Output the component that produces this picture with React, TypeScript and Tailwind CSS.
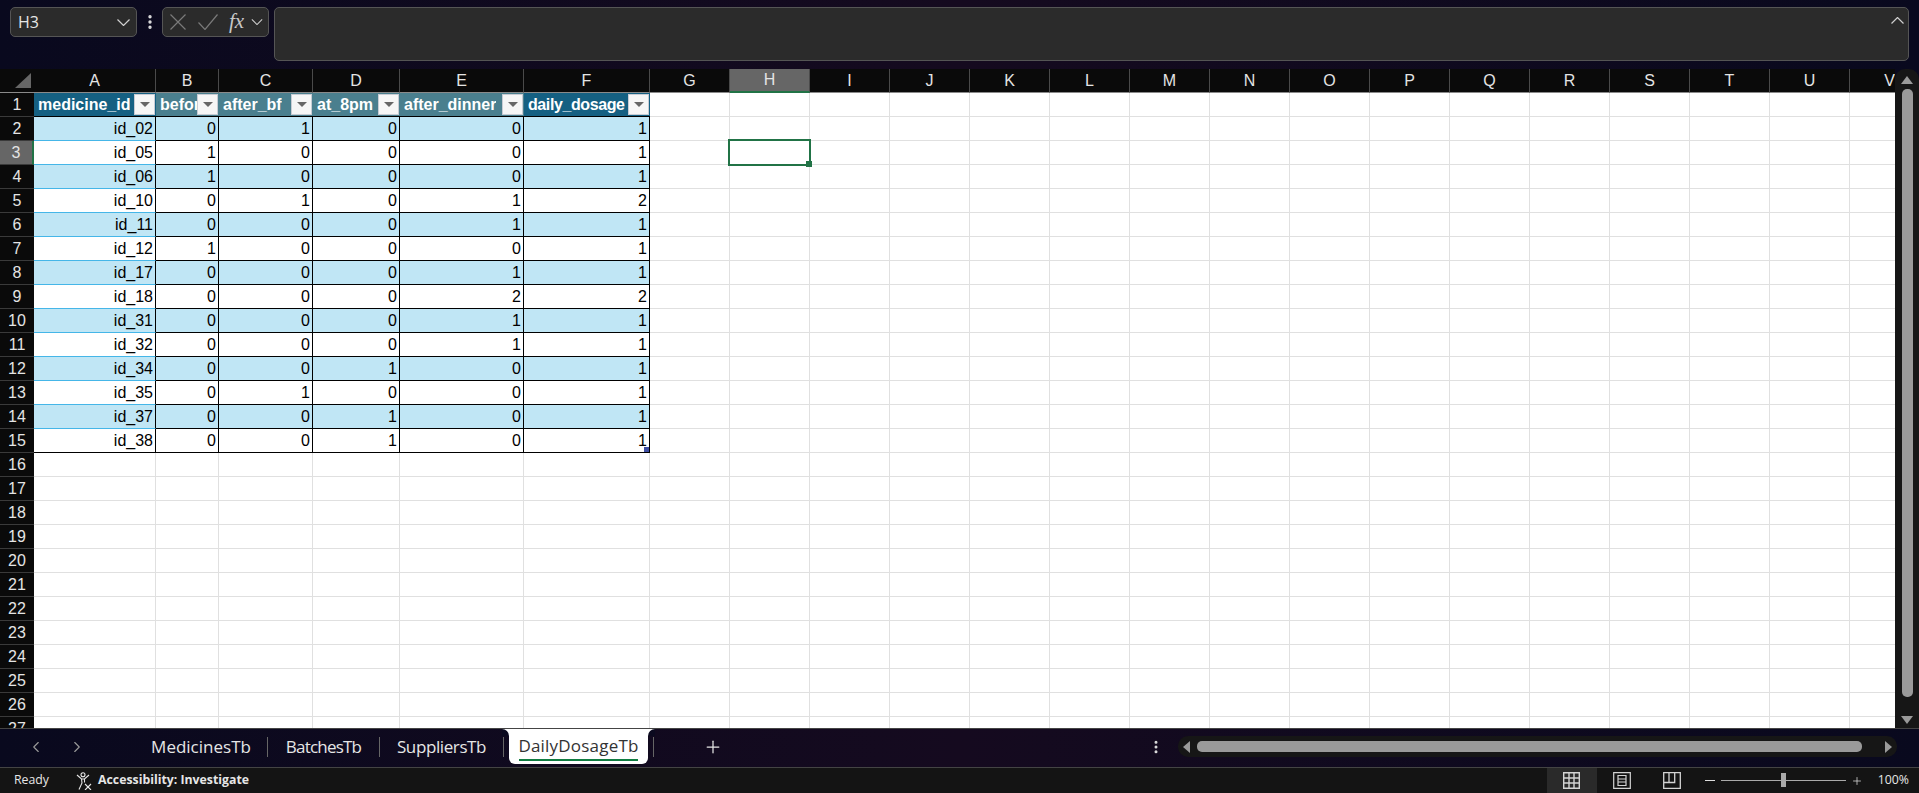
import React from 'react';
import { ChevronLeft, ChevronRight, Plus, EllipsisVertical } from 'lucide-react';

const columns = [
  { name: 'A', width: 122 },
  { name: 'B', width: 63 },
  { name: 'C', width: 94 },
  { name: 'D', width: 87 },
  { name: 'E', width: 124 },
  { name: 'F', width: 126 },
  { name: 'G', width: 80 },
  { name: 'H', width: 80 },
  ...'IJKLMNOPQRSTUV'.split('').map((name) => ({ name, width: 80 })),
];

const headers = ['medicine_id', 'before_bf', 'after_bf', 'at_8pm', 'after_dinner', 'daily_dosage'];

const data: (string | number)[][] = [
  ['id_02', 0, 1, 0, 0, 1],
  ['id_05', 1, 0, 0, 0, 1],
  ['id_06', 1, 0, 0, 0, 1],
  ['id_10', 0, 1, 0, 1, 2],
  ['id_11', 0, 0, 0, 1, 1],
  ['id_12', 1, 0, 0, 0, 1],
  ['id_17', 0, 0, 0, 1, 1],
  ['id_18', 0, 0, 0, 2, 2],
  ['id_31', 0, 0, 0, 1, 1],
  ['id_32', 0, 0, 0, 1, 1],
  ['id_34', 0, 0, 1, 0, 1],
  ['id_35', 0, 1, 0, 0, 1],
  ['id_37', 0, 0, 1, 0, 1],
  ['id_38', 0, 0, 1, 0, 1],
];

const rowNumbers = Array.from({ length: 27 }, (_, i) => i + 1);

// tight little chevron, lucide's box is too big for these spots
const Chev = ({ up, small }: { up?: boolean; small?: boolean }) => (
  <svg
    viewBox="0 0 13 7"
    className={small ? 'h-[6px] w-[12px] shrink-0' : 'h-[7px] w-[13px] shrink-0'}
    fill="none"
    stroke="#d0d0d0"
    strokeWidth="1.2"
  >
    <polyline points={up ? '0.5,6.5 6.5,0.5 12.5,6.5' : '0.5,0.5 6.5,6.5 12.5,0.5'} />
  </svg>
);

const FilterButton = () => (
  <div className="mr-px ml-auto flex h-[21px] w-[21px] shrink-0 items-center justify-center border border-[#c8ccd4] bg-[#f6f6f6]">
    <div className="h-0 w-0 border-x-[5px] border-t-[5px] border-x-transparent border-t-[#666]" />
  </div>
);

const RowHeader = ({ n }: { n: number }) => (
  <div
    className={`box-border flex w-[34px] shrink-0 items-center justify-center border-b border-[#3a3a3a] text-[16px] text-[#e4e4e4] ${
      n === 3 ? 'border-r-2 border-r-[#217346] bg-[#666]' : 'bg-[#0a0a0a]'
    }`}
  >
    {n}
  </div>
);

const HeaderRow = () => (
  <div className="flex h-6 shrink-0">
    <RowHeader n={1} />
    {columns.map((col, i) => {
      if (i < 6) {
        const outer = i === 0 || i === 5;
        return (
          <div
            key={col.name}
            style={{ width: col.width }}
            className={`box-border flex shrink-0 items-center overflow-hidden border-b border-black pl-1 text-[16px] font-bold text-white ${
              outer ? 'bg-[#156082]' : 'bg-[#4a7f8e]'
            }`}
          >
            <span
              className={`min-w-0 overflow-hidden whitespace-nowrap ${
                i === 5 ? 'tracking-[-0.4px]' : 'tracking-normal'
              }`}
            >
              {headers[i]}
            </span>
            <FilterButton />
          </div>
        );
      }
      return (
        <div
          key={col.name}
          style={{ width: col.width }}
          className="box-border shrink-0 border-r border-b border-[#e0e0e0] bg-white"
        />
      );
    })}
  </div>
);

const DataRow = ({ n }: { n: number }) => {
  const row = data[n - 2];
  const striped = n % 2 === 0;
  return (
    <div className="flex h-6 shrink-0">
      <RowHeader n={n} />
      {columns.map((col, i) => {
        if (row && i < 6) {
          const last = n === 15;
          return (
            <div
              key={col.name}
              style={{ width: col.width }}
              className={`relative box-border flex shrink-0 items-center justify-end border-r border-b border-r-black pr-[2px] text-[16px] text-black ${
                last || i > 0 ? 'border-b-black' : 'border-b-[#45b6e8]'
              } ${striped ? 'bg-[#c0e6f5]' : 'bg-white'}`}
            >
              {row[i]}
              {last && i === 5 && (
                <div className="absolute right-0 bottom-0 h-[5px] w-[5px] bg-[#3f4fa3]" />
              )}
            </div>
          );
        }
        const selected = n === 3 && col.name === 'H';
        return (
          <div
            key={col.name}
            style={{ width: col.width }}
            className={`relative box-border shrink-0 border-r border-b border-[#e0e0e0] bg-white ${
              selected ? 'z-10' : ''
            }`}
          >
            {selected && (
              <div className="absolute -top-[2px] -right-[2px] -bottom-[2px] -left-[2px] border-2 border-[#217346]">
                <div className="absolute -right-[3px] -bottom-[3px] h-[6px] w-[6px] bg-[#217346]" />
              </div>
            )}
          </div>
        );
      })}
    </div>
  );
};

const FormulaBar = () => (
  <div className="flex h-[69px] shrink-0 items-start px-[10px] pt-[7px]">
    <div className="flex h-[30px] w-[127px] items-center justify-between rounded-[5px] border border-[#555] bg-[#2b2b2b] pr-[6px] pl-[7px] text-[16px] text-[#e6e6e6]">
      <span style={{ fontFamily: '"Open Sans", sans-serif' }}>H3</span>
      <Chev />
    </div>
    <div className="flex h-[30px] w-[25px] items-center justify-center">
      <EllipsisVertical className="h-[18px] w-[18px] text-[#e0e0e0]" strokeWidth={2.5} />
    </div>
    <div className="flex h-[30px] w-[107px] items-center rounded-[5px] border border-[#555] bg-[#2b2b2b] pl-[7px]">
      <svg viewBox="0 0 16 16" className="h-[16px] w-[16px]" fill="none" stroke="#7a7a7a" strokeWidth="1.2">
        <path d="M0.5 0.5l15 15M15.5 0.5l-15 15" />
      </svg>
      <svg viewBox="0 0 20 16" className="ml-[12px] h-[16px] w-[20px]" fill="none" stroke="#7a7a7a" strokeWidth="1.2">
        <path d="M0.5 8.5l6.5 7L19.5 0.5" />
      </svg>
      <span
        className="ml-[11px] text-[21px] text-[#c8c8c8] italic"
        style={{ fontFamily: '"Liberation Serif", serif' }}
      >
        fx
      </span>
      <div className="ml-[7px]">
        <Chev small />
      </div>
    </div>
    <div className="ml-[5px] flex h-[54px] flex-1 justify-end rounded-[5px] border border-[#555] bg-[#2b2b2b] pt-[9px] pr-[4px]">
      <Chev up />
    </div>
  </div>
);

const Grid = () => (
  <div className="flex min-h-0 flex-1">
    <div className="min-w-0 flex-1 overflow-hidden">
      <div className="flex h-6">
        <div className="relative w-[34px] shrink-0 border-b border-[#8a8a8a] bg-[#0a0a0a]">
          <div className="absolute right-[3px] bottom-[4px] h-0 w-0 border-b-[15px] border-l-[16px] border-b-[#666] border-l-transparent" />
        </div>
        {columns.map((col) => (
          <div
            key={col.name}
            style={{ width: col.width }}
            className={`box-border flex shrink-0 items-center justify-center border-r border-b border-r-[#4a4a4a] text-[16px] text-[#e4e4e4] ${
              col.name === 'H' ? 'border-b-2 border-b-[#217346] bg-[#666]' : 'border-b-[#8a8a8a] bg-[#0a0a0a]'
            }`}
          >
            {col.name}
          </div>
        ))}
      </div>
      <HeaderRow />
      {rowNumbers.slice(1).map((n) => (
        <DataRow key={n} n={n} />
      ))}
    </div>
    <div className="flex w-[24px] shrink-0 flex-col items-center rounded-t-[10px] bg-[#161616] pt-[7px]">
      <div className="h-0 w-0 border-x-[6px] border-b-[8px] border-x-transparent border-b-[#9a9a9a]" />
      <div className="mt-[5px] h-[608px] w-[11px] rounded-[5px] bg-[#9a9a9a]" />
      <div className="mt-[19px] h-0 w-0 border-x-[6px] border-t-[8px] border-x-transparent border-t-[#9a9a9a]" />
    </div>
  </div>
);

const Tab = ({ label, width, tracking }: { label: string; width: string; tracking: string }) => (
  <div className={`text-center text-[#e6e6e6] ${width} ${tracking}`}>{label}</div>
);

const ActiveTab = () => (
  <div className="relative -mt-px flex h-[35px] w-[139px] flex-col items-center rounded-b-[6px] bg-white pt-[4px] tracking-[0.2px] text-[#333]">
    <div className="absolute top-0 -left-[7px] h-[7px] w-[7px] bg-white">
      <div className="h-full w-full rounded-tr-[7px] bg-[#0b0a1f]" />
    </div>
    <div className="absolute top-0 -right-[7px] h-[7px] w-[7px] bg-white">
      <div className="h-full w-full rounded-tl-[7px] bg-[#0b0a1f]" />
    </div>
    <span>DailyDosageTb</span>
    <div className="mt-[1px] h-[2px] w-[119px] bg-[#107c41]" />
  </div>
);

const Separator = () => <div className="h-[20px] w-px bg-[#666]" />;

const TabBar = () => (
  <div className="flex h-[40px] shrink-0 items-start border-t border-b border-[#444]">
    <div className="flex h-[35px] w-[135px] items-center pl-[27px]">
      <ChevronLeft className="h-[18px] w-[18px] text-[#9a9a9a]" strokeWidth={1.5} />
      <ChevronRight className="ml-[23px] h-[18px] w-[18px] text-[#9a9a9a]" strokeWidth={1.5} />
    </div>
    <div
      className="flex h-[35px] items-center text-[17px]"
      style={{ fontFamily: '"Open Sans", sans-serif' }}
    >
      <Tab label="MedicinesTb" width="w-[132px]" tracking="tracking-normal" />
      <Separator />
      <Tab label="BatchesTb" width="w-[111px]" tracking="tracking-[-0.8px]" />
      <Separator />
      <Tab label="SuppliersTb" width="w-[123px]" tracking="tracking-[-0.4px]" />
      <Separator />
      <div className="w-[5px]" />
      <ActiveTab />
      <div className="w-[5px]" />
      <Separator />
    </div>
    <div className="flex h-[35px] w-[120px] items-center pl-[49px]">
      <Plus className="h-[20px] w-[20px] text-[#e6e6e6]" strokeWidth={1.5} />
    </div>
    <div className="ml-auto flex h-[35px] items-center pr-[22px]">
      <EllipsisVertical className="mr-[14px] h-[16px] w-[16px] text-[#ddd]" strokeWidth={2.5} />
      <div className="flex h-[21px] w-[719px] items-center rounded-[10px] bg-[#161616] px-[5px]">
        <div className="h-0 w-0 border-y-[6px] border-r-[7px] border-y-transparent border-r-[#9a9a9a]" />
        <div className="ml-[7px] h-[11px] w-[665px] rounded-[5px] bg-[#9a9a9a]" />
        <div className="ml-auto h-0 w-0 border-y-[6px] border-l-[7px] border-y-transparent border-l-[#9a9a9a]" />
      </div>
    </div>
  </div>
);

const AccessibilityIcon = () => (
  <svg viewBox="0 0 16 18" className="h-[18px] w-[16px]" fill="none" stroke="#e6e6e6" strokeWidth="1.1">
    <circle cx="7" cy="2.8" r="2" />
    <path d="M1 3l4.5 4h3L13 3M5.5 7l.5 4-3 6.5M8.5 7v3.5" />
    <path d="M9 12l6 6M15 12l-6 6" />
  </svg>
);

const NormalIcon = () => (
  <svg viewBox="0 0 17 17" className="h-[17px] w-[17px]" fill="none" stroke="#d4d4d4" strokeWidth="1.4">
    <path d="M.7.7h15.6v15.6H.7zM6 .7v15.6M11 .7v15.6M.7 6h15.6M.7 11h15.6" />
  </svg>
);

const PageLayoutIcon = () => (
  <svg viewBox="0 0 18 17" className="h-[17px] w-[18px]" fill="none" stroke="#d4d4d4" strokeWidth="1.2">
    <path d="M.7.7h16.6v15.6H.7z" />
    <path d="M5 3.5h8v10H5zM5 7h8M5 10h8" />
  </svg>
);

const PageBreakIcon = () => (
  <svg viewBox="0 0 18 17" className="h-[17px] w-[18px]" fill="none" stroke="#d4d4d4" strokeWidth="1.3">
    <path d="M.7.7h16.6v15.6H.7zM.7 10.5h11V.7M6 .7v9.8" />
  </svg>
);

const StatusBar = () => (
  <div
    className="flex h-[25px] shrink-0 items-center bg-[#141414] pl-[14px] text-[12.3px] text-[#e6e6e6]"
    style={{ fontFamily: '"Open Sans", sans-serif' }}
  >
    <span>Ready</span>
    <div className="ml-[27px] flex items-center gap-[6px]">
      <AccessibilityIcon />
      <span className="font-bold">Accessibility: Investigate</span>
    </div>
    <div className="ml-auto flex h-full items-center pr-[10px]">
      <div className="flex h-full w-[50px] items-center justify-center bg-[#2a2a2a]">
        <NormalIcon />
      </div>
      <div className="flex h-full w-[50px] items-center justify-center">
        <PageLayoutIcon />
      </div>
      <div className="flex h-full w-[50px] items-center justify-center">
        <PageBreakIcon />
      </div>
      <div className="ml-[8px] h-[1.5px] w-[10px] bg-[#ddd]" />
      <div className="relative ml-[6px] h-px w-[125px] bg-[#aaa]">
        <div className="absolute top-[-7px] left-[60px] h-[14px] w-[5px] bg-[#aaa]" />
      </div>
      <Plus className="ml-[5px] h-[12px] w-[12px] text-[#ddd]" strokeWidth={1.5} />
      <span className="ml-[15px]">100%</span>
    </div>
  </div>
);

export default function App() {
  return (
    <div
      className="flex h-screen w-full flex-col overflow-hidden bg-gradient-to-r from-[#09091e] via-[#150a1f] to-[#09091e]"
      style={{ fontFamily: '"Liberation Sans", Arial, sans-serif' }}
    >
      <FormulaBar />
      <Grid />
      <TabBar />
      <StatusBar />
    </div>
  );
}
